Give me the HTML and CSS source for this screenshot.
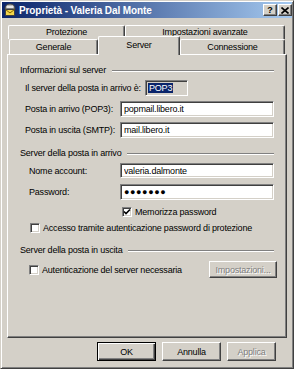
FILE: index.html
```html
<!DOCTYPE html>
<html lang="it">
<head>
    <meta charset="UTF-8">
    <meta name="viewport" content="width=device-width, initial-scale=1.0">
    <title>Proprietà - Valeria Dal Monte</title>
    <link rel="stylesheet" href="styles.css">
</head>
<body>
    <div id="dialog">
        <div class="titlebar">
            <svg class="appicon" width="14" height="14" viewBox="0 0 14 14">
                <path d="M2 6 Q2 1 7 1 Q12 1 12 6 Z" fill="#b8b8b8" stroke="#404040" stroke-width="1"/>
                <rect x="4" y="3" width="6" height="2" fill="#e8e8e8"/>
                <rect x="2.5" y="6.5" width="9" height="6" fill="#f4d64a" stroke="#404040" stroke-width="1"/>
                <path d="M2.5 6.5 L7 10 L11.5 6.5" fill="none" stroke="#806000" stroke-width="1"/>
            </svg>
            <span class="title">Proprietà - Valeria Dal Monte</span>
            <div class="capbtns">
                <span class="capbtn">?</span>
                <span class="capbtn">
                    <svg width="8" height="7" viewBox="0 0 8 7">
                        <path d="M0.5 0.5 L7.5 6.5 M7.5 0.5 L0.5 6.5" stroke="#000" stroke-width="1.6"/>
                    </svg>
                </span>
            </div>
        </div>

        <div class="content">
            <div class="tabrow back">
                <div class="tab t-prot">Protezione</div>
                <div class="tab t-avanz">Impostazioni avanzate</div>
            </div>
            <div class="tabrow front">
                <div class="tab t-gen">Generale</div>
                <div class="tab t-srv active">Server</div>
                <div class="tab t-conn">Connessione</div>
            </div>

            <div class="panel">
                <div class="group"><span>Informazioni sul server</span></div>
                <div class="row r-tipo">
                    <label class="lbl l1">Il server della posta in arrivo è:</label>
                    <div class="ro"><span class="sel">POP3</span></div>
                </div>
                <div class="row r-in">
                    <label class="lbl l1" for="pop">Posta in arrivo (POP3):</label>
                    <input class="field" type="text" id="pop" value="popmail.libero.it">
                </div>
                <div class="row r-out">
                    <label class="lbl l1" for="smtp">Posta in uscita (SMTP):</label>
                    <input class="field" type="text" id="smtp" value="mail.libero.it">
                </div>

                <div class="group g2"><span>Server della posta in arrivo</span></div>
                <div class="row r-acc">
                    <label class="lbl l2" for="acc">Nome account:</label>
                    <input class="field" type="text" id="acc" value="valeria.dalmonte">
                </div>
                <div class="row r-pwd">
                    <label class="lbl l2">Password:</label>
                    <div class="field dots">●●●●●●●</div>
                </div>
                <div class="check c-mem">
                    <span class="chk">
                        <svg width="8" height="8" viewBox="0 0 8 8">
                            <path d="M1 3.5 L3 5.5 L7 1.5" fill="none" stroke="#000" stroke-width="1.6"/>
                        </svg>
                    </span>
                    <span>Memorizza password</span>
                </div>
                <div class="check c-spa">
                    <span class="chk"></span>
                    <span>Accesso tramite autenticazione password di protezione</span>
                </div>

                <div class="group g3"><span>Server della posta in uscita</span></div>
                <div class="check c-auth">
                    <span class="chk"></span>
                    <span>Autenticazione del server necessaria</span>
                    <span class="btn small disabled">Impostazioni...</span>
                </div>
            </div>

            <div class="buttons">
                <span class="btn default b-ok">OK</span>
                <span class="btn b-cancel">Annulla</span>
                <span class="btn disabled b-apply">Applica</span>
            </div>
        </div>
    </div>
</body>
</html>
```

FILE: styles.css
```css
* {
    box-sizing: border-box;
    margin: 0;
    padding: 0;
}
body {
    background: #d4d0c8;
    font-family: "Liberation Sans", Arial, sans-serif;
    font-size: 9px;
    letter-spacing: -0.2px;
    color: #000;
}
#dialog {
    width: 294px;
    height: 369px;
    padding: 1px;
    background: #d4d0c8;
    border: 1px solid;
    border-color: #d4d0c8 #404040 #404040 #d4d0c8;
    box-shadow: inset 1px 1px #fff, inset -1px -1px #808080;
}

/* title bar */
.titlebar {
    height: 16px;
    display: flex;
    align-items: center;
    padding: 0 0 0 1px;
    background: linear-gradient(to right, #0a246a, #a6caf0);
}
.appicon {
    flex: none;
}
.title {
    margin-left: 2px;
    color: #fff;
    font-weight: bold;
    font-size: 10px;
    letter-spacing: -0.1px;
}
.capbtns {
    margin-left: auto;
    display: flex;
    gap: 1px;
}
.capbtn {
    width: 14px;
    height: 12px;
    display: flex;
    align-items: center;
    justify-content: center;
    background: #d4d0c8;
    border: 1px solid;
    border-color: #fff #404040 #404040 #fff;
    box-shadow: inset -1px -1px #808080;
    font-weight: bold;
    font-size: 9px;
    line-height: 9px;
}

/* tabs */
.content {
    padding: 7px 5px 0 5px;
}
.tabrow {
    display: flex;
}
.tabrow.back {
    height: 14px;
    margin-left: 1px;
}
.tabrow.front {
    height: 15px;
    margin-left: 2px;
}
.tab {
    height: 100%;
    text-align: center;
    line-height: 13px;
    background: #d4d0c8;
    border-top: 1px solid #fff;
    border-left: 1px solid #fff;
    border-right: 1px solid #404040;
    border-radius: 2px 2px 0 0;
    box-shadow: inset -1px 0 #808080;
}
.front .tab {
    line-height: 15px;
}
.t-prot { width: 117px; }
.t-avanz { width: 160px; }
.t-gen { width: 89px; }
.t-srv { width: 82px; }
.t-conn { width: 105px; }
.tab.active {
    height: 19px;
    margin-top: -3px;
    line-height: 16px;
    position: relative;
    z-index: 1;
}

/* page */
.panel {
    height: 284px;
    padding: 10px 12px 0 12px;
    border: 1px solid;
    border-color: #fff #404040 #404040 #fff;
    box-shadow: inset -1px -1px #808080;
}
.group {
    height: 11px;
    line-height: 11px;
    display: flex;
    align-items: center;
}
.group::after {
    content: "";
    flex: 1;
    margin-left: 6px;
    border-top: 1px solid #808080;
    border-bottom: 1px solid #fff;
}
.g2 { margin-top: 10px; }
.g3 { margin-top: 12px; }

.row {
    display: flex;
    align-items: center;
    height: 16px;
}
.lbl {
    width: 100px;
    flex: none;
}
.l1 { padding-left: 5px; }
.l2 { padding-left: 9px; }
.r-tipo { margin-top: 4px; }
.r-tipo .lbl { width: 125px; }
.r-in, .r-out { margin-top: 5px; }
.r-acc { margin-top: 4px; height: 15px; }
.r-pwd { margin-top: 6px; }

.field {
    width: 154px;
    height: 16px;
    padding: 0 3px;
    background: #fff;
    border: 1px solid;
    border-color: #808080 #fff #fff #808080;
    box-shadow: inset 1px 1px #404040, inset -1px -1px #d4d0c8;
    font: inherit;
    letter-spacing: inherit;
    color: #000;
    outline: none;
}
.r-acc .field {
    height: 15px;
}
.dots {
    font-size: 9px;
    line-height: 14px;
    letter-spacing: 0.6px;
}
.ro {
    width: 43px;
    height: 16px;
    padding: 2px 2px;
    border: 1px solid;
    border-color: #808080 #fff #fff #808080;
    box-shadow: inset 1px 1px #404040;
}
.sel {
    display: inline-block;
    height: 10px;
    line-height: 10px;
    padding: 0 1px;
    background: #0a246a;
    color: #fff;
}

/* checkboxes */
.check {
    display: flex;
    align-items: center;
    height: 11px;
}
.chk {
    width: 10px;
    height: 10px;
    flex: none;
    display: flex;
    align-items: center;
    justify-content: center;
    margin-right: 3px;
    background: #fff;
    border: 1px solid;
    border-color: #808080 #fff #fff #808080;
    box-shadow: inset 1px 1px #404040, inset -1px -1px #d4d0c8;
}
.c-mem {
    margin-top: 6px;
    padding-left: 102px;
}
.c-spa {
    margin-top: 5px;
    padding-left: 10px;
}
.c-auth {
    margin-top: 5px;
    height: 17px;
    padding-left: 9px;
    margin-right: -3px;
}

/* buttons */
.btn {
    display: flex;
    align-items: center;
    justify-content: center;
    background: #d4d0c8;
    border: 1px solid;
    border-color: #fff #404040 #404040 #fff;
    box-shadow: inset -1px -1px #808080;
}
.btn.small {
    margin-left: auto;
    width: 68px;
    height: 17px;
}
.btn.default {
    border-color: #000;
    box-shadow: inset 1px 1px #fff, inset -1px -1px #404040, inset -2px -2px #808080;
}
.btn.disabled {
    color: #808080;
    text-shadow: 1px 1px #fff;
}
.buttons {
    display: flex;
    margin-top: 4px;
    padding-left: 90px;
    gap: 6px;
}
.buttons .btn {
    height: 19px;
}
.b-ok { width: 59px; }
.b-cancel { width: 59px; }
.b-apply { width: 49px; }
```
